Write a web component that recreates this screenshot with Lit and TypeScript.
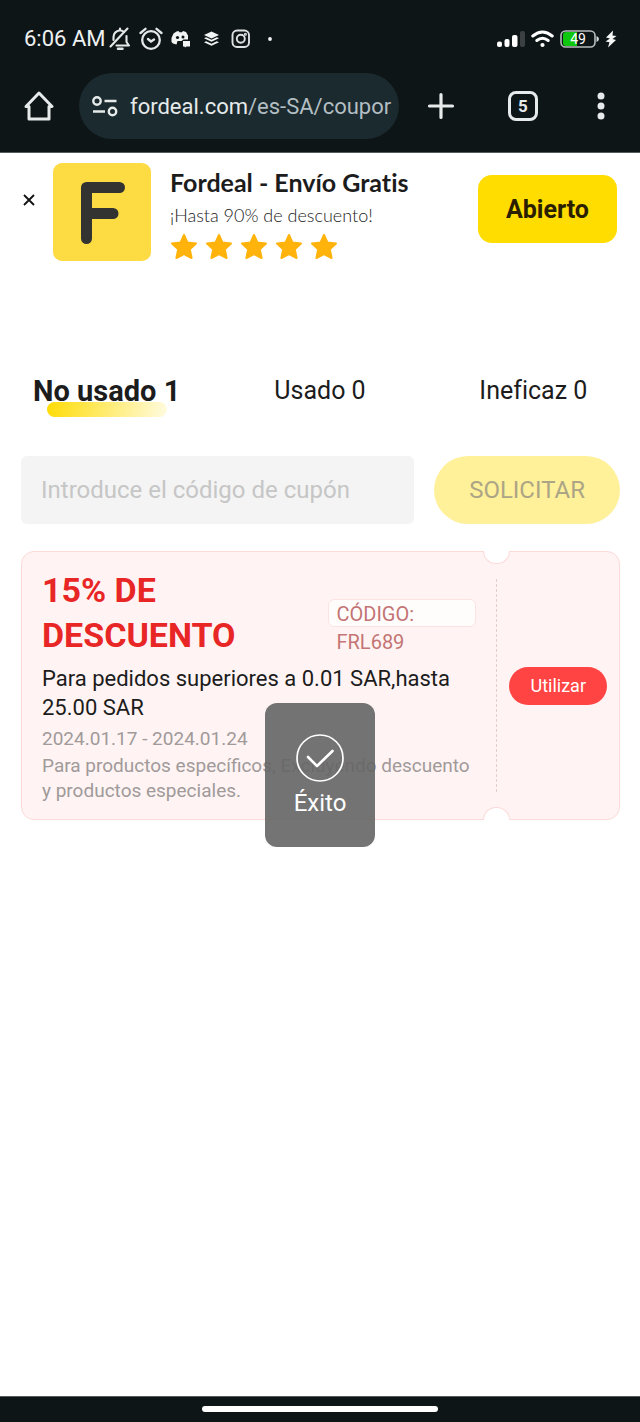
import { LitElement, html, css } from "lit";
import { customElement, property, state } from "lit/decorators.js";
import { classMap } from "lit/directives/class-map.js";

const reset = css`
  *, *::before, *::after { box-sizing: border-box; }
  button, input { font: inherit; color: inherit; margin: 0; padding: 0; border: 0; background: none; }
  button { cursor: pointer; }
  svg { display: block; flex: none; }
`;

@customElement("status-bar")
export class StatusBar extends LitElement {
  static styles = [reset, css`
    :host { display: flex; align-items: center; justify-content: space-between; padding: 24px 23px 0 24px; line-height: 30px; color: #eef1f1; }
    .side { display: flex; align-items: center; }
    .time { font-size: 22px; margin-right: 4px; }
    .apps { display: flex; align-items: center; gap: 8px; }
    .right { gap: 6px; }
  `];

  render() {
    return html`
      <div class="side">
        <span class="time">6:06 AM</span>
        <div class="apps">
          <svg width="22" height="24" viewBox="0 0 22 24" fill="none" stroke="#e4e8e8" stroke-width="2.100" stroke-linecap="round" stroke-linejoin="round">
            <path d="M4.500 13V10Q4.800 4.200 11 3.200Q13.500 3.500 15 5M17.500 9V15L20 18.500H7.500"/>
            <path d="M1.500 19.500L18.500 1.500M11 3V1.500"/>
            <path d="M9 21.800H13.500" stroke-width="2.500"/>
          </svg>
          <svg width="24" height="24" viewBox="0 0 24 24" fill="none" stroke="#e4e8e8" stroke-width="2.300" stroke-linecap="round">
            <circle cx="12" cy="13" r="8.800"/>
            <path d="M1.500 6L6.500 1.800M22.500 6L17.500 1.800M9 12L12 14.500L15 12.500"/>
          </svg>
          <svg width="20" height="18" viewBox="0 0 20 18">
            <path fill="#f2f4f4" d="M5.500 1.500L7.500 1L8.500 2.300H11L12 1L15 2L17 5.500V9.500H12.500L10.500 11H6.500L5.500 14.500L2 13.500L.5 12V8L2.500 3.500ZM12 11H19V16.500H15.500L14 17.500L13.500 16.500H12Z"/>
            <circle cx="6.500" cy="7.500" r="1.600" fill="#0e1517"/><circle cx="12" cy="7" r="1.500" fill="#0e1517"/>
          </svg>
          <svg width="24" height="16" viewBox="0 0 24 16" fill="#f2f4f4">
            <path d="M12.500 .5L20 4L12.500 7.500L5 4Z"/>
            <path d="M5 7.200L7.200 6.200L12.500 8.700L17.800 6.200L20 7.200L12.500 10.800Z"/>
            <path d="M5 11.200L7.200 10.200L12.500 12.700L17.800 10.200L20 11.200L12.500 14.800Z"/>
          </svg>
          <svg width="20" height="20" viewBox="0 0 20 20" fill="none" stroke="#dde1e1" stroke-width="1.900">
            <rect x="1.500" y="1.500" width="16.500" height="16.500" rx="4.500"/>
            <circle cx="9.800" cy="9.800" r="4"/><circle cx="14.400" cy="5.200" r=".6"/>
          </svg>
          <svg width="20" height="6" viewBox="0 0 20 6"><circle cx="11" cy="3" r="1.900" fill="#f2f4f4"/></svg>
        </div>
      </div>
      <div class="side right">
        <svg width="28" height="18" viewBox="0 0 28 18" fill="#fff">
          <rect x="0" y="11.500" width="5" height="5.500" rx="2"/>
          <rect x="7.500" y="9" width="5" height="8" rx="2"/>
          <rect x="15" y="5" width="5.500" height="12" rx="2"/>
          <rect x="23" y="1" width="5" height="16" rx="2" fill="#3b4143"/>
        </svg>
        <svg width="23" height="18" viewBox="0 0 23 18" fill="none" stroke="#fff" stroke-width="3" stroke-linecap="round">
          <path d="M1.800 6Q11.500-2 21.200 6"/><path d="M5.800 10.500Q11.500 6 17.200 10.500"/>
          <circle cx="11.500" cy="15" r="2.100" fill="#fff" stroke="none"/>
        </svg>
        <svg width="39" height="18" viewBox="0 0 39 18">
          <path d="M17 2H6Q3 2 3 5V13Q3 16 6 16H17Z" fill="#0fc70f"/>
          <rect x="1" y="1" width="34" height="16" rx="4.500" fill="none" stroke="#b8bdbd" stroke-width="1.600"/>
          <path d="M36.500 6Q39 7 39 9T36.500 12Z" fill="#d5d9d9"/>
          <text x="18" y="14" text-anchor="middle" font-size="14" font-family="Roboto, sans-serif" fill="#fff">49</text>
        </svg>
        <svg width="12" height="18" viewBox="0 0 12 18" fill="#f4f6f6">
          <path d="M8 .5L1 7.500L5 8.500L.5 11.500L4.500 12.200L3 17.500L11 10L7.500 9L11.500 6L7.500 5.500Z"/>
        </svg>
      </div>
    `;
  }
}

@customElement("browser-bar")
export class BrowserBar extends LitElement {
  @property() domain = "fordeal.com";
  @property() path = "/es-SA/coupor";
  @property({ type: Number }) tabs = 5;

  static styles = [reset, css`
    :host { display: flex; align-items: center; padding: 19px 29px 13px 24px; color: #e6eaea; }
    .address { display: flex; align-items: center; gap: 12px; flex: 1; min-width: 0; height: 66px; margin: 0 28px 0 25px; padding: 0 4px 0 13px; border-radius: 33px; background: #1b2a2f; font-size: 22px; line-height: 30px; text-align: left; }
    .url { flex: 1; min-width: 0; padding-top: 2px; overflow: hidden; white-space: nowrap; color: #b3bec2; }
    .domain { color: #e6eaea; }
    .actions { display: flex; align-items: center; gap: 53px; }
    .tabs { display: grid; place-items: center; width: 30px; height: 30px; border: 3px solid #e6eaea; border-radius: 8px; font-size: 17px; line-height: 20px; font-weight: 700; }
  `];

  render() {
    return html`
      <button aria-label="Inicio">
        <svg width="30" height="32" viewBox="0 0 30 32" fill="none" stroke="#e6eaea" stroke-width="3" stroke-linejoin="round" stroke-linecap="round">
          <path d="M2 16.500L15 3L28 16.500H25V29H5V16.500Z"/>
        </svg>
      </button>
      <button class="address">
        <svg width="26" height="22" viewBox="0 0 26 22" fill="none" stroke="#e6eaea" stroke-width="2.400">
          <circle cx="5" cy="6" r="3.700"/><path d="M12.500 6H24.500M1 16.500H13"/><circle cx="20.500" cy="16.500" r="3.700"/>
        </svg>
        <span class="url"><span class="domain">${this.domain}</span>${this.path}</span>
      </button>
      <div class="actions">
        <button aria-label="Nueva pestaña">
          <svg width="28" height="28" viewBox="0 0 28 28" stroke="#e6eaea" stroke-width="3.200" stroke-linecap="round"><path d="M14 2.500V25.500M2.500 14H25.500"/></svg>
        </button>
        <button class="tabs">${this.tabs}</button>
        <button aria-label="Menú">
          <svg width="20" height="28" viewBox="0 0 20 28" fill="#e6eaea"><circle cx="10" cy="4" r="3.500"/><circle cx="10" cy="14" r="3.500"/><circle cx="10" cy="24" r="3.500"/></svg>
        </button>
      </div>
    `;
  }
}

@customElement("app-banner")
export class AppBanner extends LitElement {
  static styles = [reset, css`
    :host { display: flex; align-items: flex-start; padding: 10px 23px 0; color: #1c1c1c; }
    .close { margin: 31px 18px 0 0; }
    .info { flex: 1; min-width: 0; margin-left: 19px; font-family: Lato, sans-serif; font-variant-ligatures: none; }
    .title { margin: 0; padding-top: 3px; font-size: 25px; line-height: 32px; font-weight: 700; }
    .tagline { margin: 0; padding-top: 3px; font-size: 18px; line-height: 28px; font-weight: 300; color: #1c1c1c; }
    .stars { display: flex; gap: 7px; padding-top: 4px; }
    .open { margin-top: 12px; padding: 0 28px; height: 68px; border-radius: 14px; background: #ffdd00; color: #2a2000; font-size: 25px; font-weight: 700; }
  `];

  render() {
    return html`
      <button class="close" aria-label="Cerrar">
        <svg width="12" height="12" viewBox="0 0 12 12" stroke="#111" stroke-width="1.800"><path d="M1 1L11 11M11 1L1 11"/></svg>
      </button>
      <svg width="98" height="98" viewBox="0 0 98 98">
        <rect width="98" height="98" rx="9" fill="#fddb43"/>
        <path d="M33.500 75.500V24.500H66.500M34 50.500H60" fill="none" stroke="#333432" stroke-width="11" stroke-linecap="round" stroke-linejoin="round"/>
      </svg>
      <div class="info">
        <h2 class="title">Fordeal - Envío Gratis</h2>
        <p class="tagline">¡Hasta 90% de descuento!</p>
        <div class="stars">
          ${[1, 2, 3, 4, 5].map(() => html`
            <svg width="28" height="27" viewBox="0 0 28 27" fill="#ffb30b" stroke="#ffb30b" stroke-width="2" stroke-linejoin="round">
              <path d="M14 2L17.400 9.500L26 10.500L19.800 16.200L21.600 25L14 21L6.400 25L8.200 16.200L2 10.500L10.600 9.500Z"/>
            </svg>`)}
        </div>
      </div>
      <button class="open">Abierto</button>
    `;
  }
}

@customElement("coupon-card")
export class CouponCard extends LitElement {
  @property() discount = "";
  @property() code = "";
  @property() condition = "";
  @property() period = "";
  @property() terms = "";

  static styles = [reset, css`
    :host { display: block; }
    .card { display: flex; border: 1px solid #fbdad8; border-radius: 13px; background: #fff4f3; }
    .details { flex: 1; min-width: 0; padding: 16px 20px 16px 20px; }
    .top { display: flex; align-items: center; justify-content: space-between; gap: 20px; margin-bottom: 6px; }
    .discount { flex: 1; margin: 0; font-size: 34px; line-height: 45px; font-weight: 700; color: #e82626; }
    .code { flex: none; width: 148px; height: 28px; padding: 0 7px; border: 1px solid #fbe3e1; border-radius: 6px; background: #fffdfc; color: #c47474; font-size: 20px; line-height: 28px; }
    p { margin: 0; }
    .condition { font-size: 22px; line-height: 29px; color: #1c1c1c; margin-bottom: 4px; }
    .small { font-size: 19px; line-height: 25px; color: #a09a9a; }
    .period { margin-bottom: 2px; }
    .stub { position: relative; display: flex; align-items: center; padding: 0 12px; }
    .stub::before, .stub::after { content: ""; position: absolute; left: -13px; width: 27px; height: 13px; background: #fff; border: 1px solid #fbdad8; }
    .stub::before { top: -1px; border-top: 0; border-radius: 0 0 13px 13px; }
    .stub::after { bottom: -1px; border-bottom: 0; border-radius: 13px 13px 0 0; }
    .tear { align-self: stretch; margin: 27px 12px 27px -12px; border-left: 1px dashed #e5cfcd; }
    .use { height: 38px; padding: 0 21px; border-radius: 19px; background: #ff4443; color: #fff; font-size: 18px; }
  `];

  render() {
    return html`
      <article class="card">
        <div class="details">
          <div class="top">
            <h3 class="discount">${this.discount}</h3>
            <div class="code">CÓDIGO: ${this.code}</div>
          </div>
          <p class="condition">${this.condition}</p>
          <p class="small period">${this.period}</p>
          <p class="small">${this.terms}</p>
        </div>
        <div class="stub"><div class="tear"></div><button class="use">Utilizar</button></div>
      </article>
    `;
  }
}

@customElement("app-root")
export class AppRoot extends LitElement {
  @state() private active = 0;
  private tabs = ["No usado 1", "Usado 0", "Ineficaz 0"];

  static styles = [reset, css`
    :host { display: flex; flex-direction: column; min-height: 100vh; background: #fff; font-family: Roboto, sans-serif; color: #1c1c1c; }
    header { background: #0e1517; border-bottom: 1px solid #555c5e; }
    main { position: relative; flex: 1; }
    .tabs { display: grid; grid-template-columns: repeat(3, 1fr); padding-top: 112px; }
    .tab { display: flex; flex-direction: column; align-items: center; font-size: 25px; line-height: 36px; font-variant-ligatures: none; }
    .tab.active { font-size: 29px; font-weight: 700; }
    .tab.active::after { content: ""; width: 120px; height: 15px; margin-top: -7px; border-radius: 8px; background: linear-gradient(100deg, #ffdc05, #fffbe0); }
    form { display: flex; gap: 20px; padding: 39px 20px 0 21px; }
    .field { flex: 1; min-width: 0; height: 68px; padding: 0 20px; border-radius: 6px; background: #f4f4f4; font-size: 24px; }
    .field::placeholder { color: #c6c6c6; opacity: 1; }
    .request { padding: 0 35px; border-radius: 34px; background: #fff09a; color: #aca585; font-size: 24px; }
    .coupons { padding: 27px 20px 0 21px; }
    .toast { position: absolute; top: 50%; left: 50%; transform: translate(-50%, -50%); display: flex; flex-direction: column; align-items: center; gap: 5px; width: 110px; padding: 31px 0 28px; border-radius: 12px; background: rgba(101, 101, 101, 0.9); color: #fff; font-size: 24px; line-height: 32px; }
    footer { display: flex; justify-content: center; padding: 9px 0 10px; border-top: 1px solid #555c5e; background: #0e1517; }
    .handle { width: 37%; height: 6px; border-radius: 3px; background: #fff; }
  `];

  render() {
    return html`
      <header><status-bar></status-bar><browser-bar></browser-bar></header>
      <main>
        <app-banner></app-banner>
        <nav class="tabs">
          ${this.tabs.map((label, i) => html`
            <button class=${classMap({ tab: true, active: i === this.active })} @click=${() => (this.active = i)}>${label}</button>`)}
        </nav>
        <form @submit=${(e: Event) => e.preventDefault()}>
          <input class="field" type="text" aria-label="Código de cupón" placeholder="Introduce el código de cupón">
          <button class="request">SOLICITAR</button>
        </form>
        <section class="coupons">
          <coupon-card
            discount="15% DE DESCUENTO"
            code="FRL689"
            condition="Para pedidos superiores a 0.01 SAR,hasta 25.00 SAR"
            period="2024.01.17 - 2024.01.24"
            terms="Para productos específicos, Excluyendo descuento y productos especiales."></coupon-card>
        </section>
        <div class="toast" role="status">
          <svg width="48" height="48" viewBox="0 0 48 48" fill="none" stroke="#fff" stroke-linecap="round" stroke-linejoin="round">
            <circle cx="24" cy="24" r="23" stroke-width="1.700"/><path d="M12 23L21 32L36.500 17" stroke-width="2.600"/>
          </svg>
          <span>Éxito</span>
        </div>
      </main>
      <footer><div class="handle"></div></footer>
    `;
  }
}
